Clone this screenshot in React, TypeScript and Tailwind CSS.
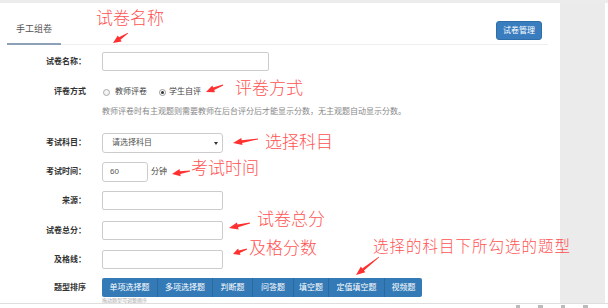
import React from 'react';

// red annotation arrows: [tailX, tailY, headX, headY]
const arrows: number[][] = [
  [128, 33, 113, 43],
  [223, 85, 206, 92],
  [258, 139, 233, 143],
  [190, 171, 172, 174],
  [250, 223, 229, 228],
  [247, 249, 233, 254],
  [379, 257, 356, 275],
];

function arrowPoints([x1, y1, x2, y2]: number[]) {
  const dx = x2 - x1;
  const dy = y2 - y1;
  const len = Math.hypot(dx, dy);
  const ux = dx / len;
  const uy = dy / len;
  const nx = -uy;
  const ny = ux;
  const h = Math.min(9, len * 0.45);
  const bx = x2 - ux * h;
  const by = y2 - uy * h;
  const pts = [
    [x1 + nx * 0.4, y1 + ny * 0.4],
    [bx + nx * 1.4, by + ny * 1.4],
    [bx + nx * 3.6, by + ny * 3.6],
    [x2, y2],
    [bx - nx * 3.6, by - ny * 3.6],
    [bx - nx * 1.4, by - ny * 1.4],
    [x1 - nx * 0.4, y1 - ny * 0.4],
  ];
  return pts.map((p) => `${p[0].toFixed(1)},${p[1].toFixed(1)}`).join(' ');
}

const notes = [
  { text: '试卷名称', cls: 'left-[96px] top-[8px] text-[17px]' },
  { text: '评卷方式', cls: 'left-[235px] top-[78px] text-[17px]' },
  { text: '选择科目', cls: 'left-[265px] top-[132px] text-[17px]' },
  { text: '考试时间', cls: 'left-[191px] top-[158px] text-[17px]' },
  { text: '试卷总分', cls: 'left-[257px] top-[209px] text-[17px]' },
  { text: '及格分数', cls: 'left-[249px] top-[238px] text-[17px]' },
  { text: '选择的科目下所勾选的题型', cls: 'left-[373px] top-[238px] text-[15.5px] tracking-[1px]' },
];

const types = [
  { name: '单项选择题', w: 'w-[55px]' },
  { name: '多项选择题', w: 'w-[55px]' },
  { name: '判断题', w: 'w-[40px]' },
  { name: '问答题', w: 'w-[41px]' },
  { name: '填空题', w: 'w-[35px]' },
  { name: '定值填空题', w: 'w-[56px]' },
  { name: '视频题', w: 'w-[38px]' },
];

function Label({ children }: { children: React.ReactNode }) {
  return <div className="w-[86px] shrink-0 text-right text-[8px] font-bold text-[#333] leading-[12px]">{children}</div>;
}

function Input({ w }: { w: string }) {
  return <div className={`${w} h-full border border-[#ccc] rounded-[2px] bg-white`} />;
}

export default function App() {
  return (
    <div className="w-[608px] h-[308px] overflow-hidden bg-white relative font-['Liberation_Sans','Noto_Sans_CJK_SC',sans-serif]">
      <div className="h-[3px] bg-[#ececec]" />
      <div className="flex h-[300px]">
        <div className="w-[560px] shrink-0 bg-white">
          {/* Header */}
          <div className="flex justify-between items-start h-[42px] ml-[7px] mr-[12px] border-b border-[#eeeeee]">
            <div className="self-end -mb-px px-[9px] pb-[8px] border-b-2 border-[#8ca1b6] text-[9px] leading-[12px] text-[#555]">
              手工组卷
            </div>
            <button className="mt-[18px] mr-[6px] w-[46px] h-[19px] rounded-[3px] bg-[#3a7dbf] border border-[#2f6ea8] text-white text-[8px] leading-none">
              试卷管理
            </button>
          </div>

          {/* Form */}
          <div className="flex flex-col pt-[7px]">
            <div className="flex items-center gap-[16px] h-[19px]">
              <Label>试卷名称：</Label>
              <Input w="w-[167px]" />
            </div>

            <div className="flex items-center gap-[16px] h-[12px] mt-[15px]">
              <Label>评卷方式</Label>
              <div className="flex items-center text-[8px] text-[#444] leading-[12px]">
                <span className="w-[7px] h-[7px] rounded-full border border-[#aaa] bg-[#f4f4f4] ml-[1px]" />
                <span className="ml-[5px]">教师评卷</span>
                <span className="w-[7px] h-[7px] rounded-full border border-[#999] bg-white ml-[12px] flex items-center justify-center">
                  <span className="w-[3px] h-[3px] rounded-full bg-[#333]" />
                </span>
                <span className="ml-[3px]">学生自评</span>
              </div>
            </div>

            <div className="ml-[102px] mt-[8px] text-[8px] leading-[12px] text-[#888]">
              教师评卷时有主观题则需要教师在后台评分后才能显示分数，无主观题自动显示分数。
            </div>

            <div className="flex items-center gap-[16px] h-[20px] mt-[15px]">
              <Label>考试科目：</Label>
              <div className="w-[121px] h-full border border-[#ccc] rounded-[3px] flex items-center justify-between pl-[9px] pr-[4px] text-[8px] text-[#555]">
                <span>请选择科目</span>
                <span className="w-0 h-0 border-l-[2px] border-r-[2px] border-t-[3px] border-l-transparent border-r-transparent border-t-[#333]" />
              </div>
            </div>

            <div className="flex items-center gap-[16px] h-[20px] mt-[9px]">
              <Label>考试时间：</Label>
              <div className="flex items-center h-full">
                <div className="w-[46px] h-full border border-[#ccc] rounded-[3px] flex items-center pl-[7px] text-[8px] text-[#555]">60</div>
                <span className="ml-[3px] text-[8px] text-[#444]">分钟</span>
              </div>
            </div>

            <div className="flex items-center gap-[16px] h-[19px] mt-[9px]">
              <Label>来源：</Label>
              <Input w="w-[121px]" />
            </div>

            <div className="flex items-center gap-[16px] h-[19px] mt-[11px]">
              <Label>试卷总分：</Label>
              <Input w="w-[121px]" />
            </div>

            <div className="flex items-center gap-[16px] h-[19px] mt-[10px]">
              <Label>及格线：</Label>
              <Input w="w-[121px]" />
            </div>

            <div className="flex items-center gap-[16px] h-[19px] mt-[9px]">
              <Label>题型排序</Label>
              <div className="flex h-full rounded-[2px] overflow-hidden bg-[#337ab7]">
                {types.map((t, i) => (
                  <div
                    key={t.name}
                    className={`${t.w} h-full flex items-center justify-center text-white text-[8px] ${i > 0 ? 'border-l border-[#2a6aa3]' : ''}`}
                  >
                    {t.name}
                  </div>
                ))}
              </div>
            </div>

            <div className="ml-[102px] mt-[1px] text-[5px] leading-[5px] text-[#aaa]">拖动题型可调整顺序</div>
          </div>
        </div>
        <div className="w-[45px] bg-[#ebebeb]" />
        <div className="flex-1 bg-white" />
      </div>
      <div className="border-t border-[#dedede] h-[5px] flex gap-[18px] pl-[516px] pt-[1px]">
        <span className="w-[4px] h-[3px] bg-[#bbb]" />
        <span className="w-[5px] h-[3px] bg-[#bbb]" />
        <span className="w-[4px] h-[3px] bg-[#bbb]" />
        <span className="w-[5px] h-[3px] bg-[#bbb]" />
      </div>

      {/* annotations */}
      {notes.map((n) => (
        <div key={n.text} className={`absolute leading-none font-light text-[#ff5252] font-['Noto_Sans_CJK_SC',sans-serif] ${n.cls}`}>
          {n.text}
        </div>
      ))}
      <svg className="absolute inset-0 pointer-events-none" width="608" height="308" viewBox="0 0 608 308">
        {arrows.map((a, i) => (
          <polygon key={i} points={arrowPoints(a)} fill="#ff3030" />
        ))}
      </svg>
    </div>
  );
}
